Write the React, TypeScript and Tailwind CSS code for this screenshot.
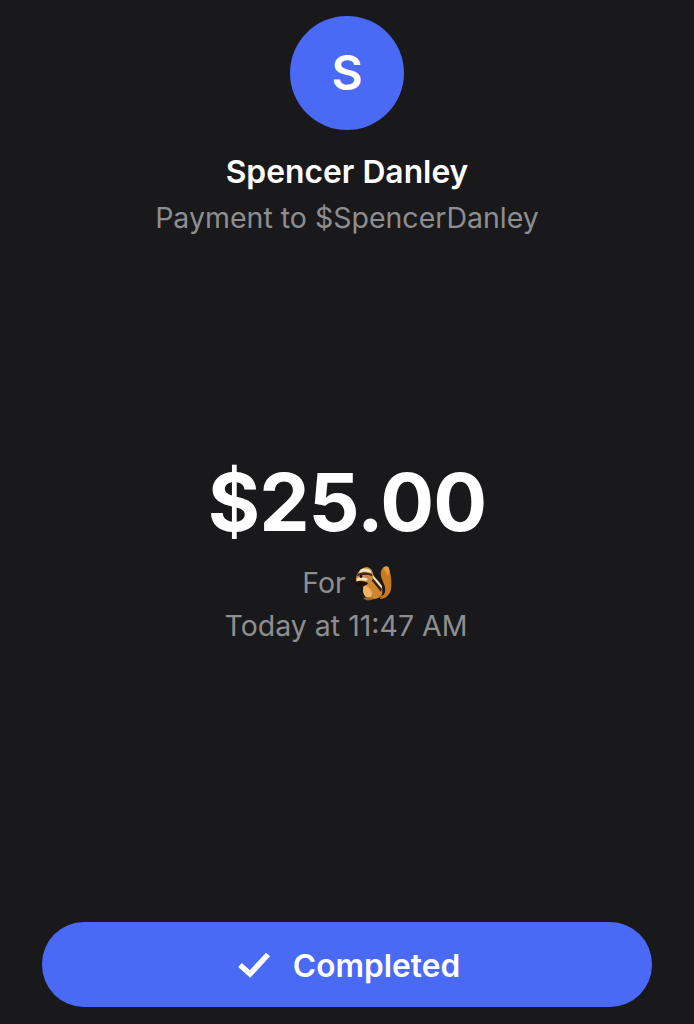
import React from 'react';

const Chipmunk = () => (
    <svg width="38" height="36" viewBox="0 0 38 36" className="block">
        {/* tail */}
        <path d="M27 31C32 30 32 24 30 19C28 14 25 9 28 4C30 1 34 0 35 3C37 9 38 18 37 24C36 30 31 34 26 34Z" fill="#c9791f" />
        <path d="M29 3C31 1 34 1 35 4C35.500 7 35 9 34 11C32 8 31 5 29 3Z" fill="#e09a45" />
        {/* body */}
        <path d="M12 12C18 10 24 14 27 20C29 25 29 30 26 32C21 35 15 35 12 32C9 28 8 18 12 12Z" fill="#cf8630" />
        <path d="M10 21C13 20 17 24 18 28C18 32 15 34 12 32C9 30 8 24 10 21Z" fill="#edb366" />
        <path d="M16 9L28 23L27 27L15 12Z" fill="#33200f" />
        <path d="M19 10L28 21L28 24L17 11Z" fill="#ecdcb8" />
        {/* head */}
        <path d="M2 13C3 7 8 2 13 2C18 3 20 8 19 13C18 17 14 20 9 20C4 20 1 17 2 13Z" fill="#c58a42" />
        <path d="M6 5C9 3 14 3 17 6L17 8C13 6 9 6 5 8Z" fill="#efe3c6" />
        <path d="M4 9C8 7 13 7 18 9L18 11C13 9 8 10 3 11Z" fill="#3a2414" />
        <path d="M3 13C7 12 11 12 14 14L12 16C9 15 6 15 3 16Z" fill="#efe3c6" />
        <circle cx="7" cy="11.500" r="1.400" fill="#0c0806" />
        {/* paws and nut */}
        <path d="M2 17C5 15 11 16 14 18C13 21 6 22 3 21C1.500 20 1 18 2 17Z" fill="#1d120a" />
        <path d="M9 33C12 32 17 32 20 34C16 36 11 36 9 33Z" fill="#a3611d" />
    </svg>
);

export default function App() {
    return (
        <div className="h-[1024px] bg-[#19191b] flex flex-col items-center font-['Inter','Liberation_Sans',sans-serif] overflow-hidden">
            <div className="mt-4 w-[114px] h-[114px] rounded-full bg-[#4a69f5] flex items-center justify-center text-white text-[48px] font-semibold leading-none">
                S
            </div>
            <div className="mt-[23px] text-white text-[31.800px] font-semibold leading-[38px]">Spencer Danley</div>
            <div className="mt-[8px] text-[#8e8e91] text-[28.500px] leading-[38px]">Payment to $SpencerDanley</div>

            <div className="mt-[215px] text-white text-[80px] font-bold leading-[100px] tracking-[-1px]">$25.00</div>
            <div className="mt-[9px] h-[44px] flex items-center gap-[8px] text-[#8e8e91] text-[28.500px]">
                <span>For</span>
                <Chipmunk />
            </div>
            <div className="pr-[2px] text-[#8e8e91] text-[28.500px] leading-[42px]">Today at 11:47 AM</div>

            <div className="mt-auto mb-[17px] pt-[3px] pl-[4px] w-[610px] h-[85px] rounded-[42px] bg-[#4a69f5] flex items-center justify-center gap-[22px] text-white text-[31.700px] font-semibold">
                <svg width="33" height="26" viewBox="0 0 33 26" fill="none" className="-mt-[3px]">
                    <path d="M2 13L12 22L30 2.500" stroke="white" strokeWidth="5.500" />
                </svg>
                <span>Completed</span>
            </div>
        </div>
    );
}
